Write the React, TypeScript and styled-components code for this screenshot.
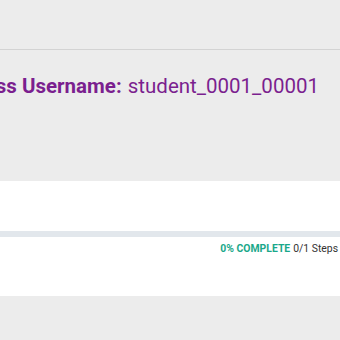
import * as React from "react";
import styled, { createGlobalStyle } from "styled-components";

const GlobalStyle = createGlobalStyle`
	html, body {
		margin: 0;
		padding: 0;
		background: #ececec;
		font-family: Roboto, "Liberation Sans", sans-serif;
		overflow: hidden;
	}
`;

const Page = styled.div`
	width: 340px;
	height: 340px;
	overflow: hidden;
	background: #ececec;
`;

const TopBar = styled.div`
	height: 49px;
	border-bottom: 1px solid #d3d3d3;
`;

const Header = styled.div`
	height: 131px;
	padding-top: 21px;
	box-sizing: border-box;
	white-space: nowrap;
`;

const Title = styled.h1`
	margin: 0 0 0 -34px;
	font-size: 20.5px;
	line-height: 30px;
	font-weight: 400;
	color: #7b1f8f;
`;

const Label = styled.span`
	font-weight: 700;
	margin-right: 1px;
`;

const Card = styled.div`
	background: #fff;
	display: flex;
	flex-direction: column;
`;

const CardHead = styled.div`
	height: 50px;
`;

const Track = styled.div`
	height: 6px;
	background: #e2e7ec;
`;

const CardBody = styled.div`
	height: 59px;
	display: flex;
	justify-content: flex-end;
	padding: 5px 2px 0 0;
	box-sizing: border-box;
	white-space: nowrap;
`;

const Status = styled.div`
	font-size: 10.4px;
	line-height: 13px;
	color: #333;
`;

const Percent = styled.span`
	color: #1aa88a;
	font-weight: 700;
	margin-right: 3px;
`;

export default function App() {
	return (
		<Page>
			<GlobalStyle />
			<TopBar />
			<Header>
				<Title>
					<Label>Class Username:</Label> student_0001_00001
				</Title>
			</Header>
			<Card>
				<CardHead />
				<Track />
				<CardBody>
					<Status>
						<Percent>0% COMPLETE</Percent>0/1 Steps
					</Status>
				</CardBody>
			</Card>
		</Page>
	);
}
